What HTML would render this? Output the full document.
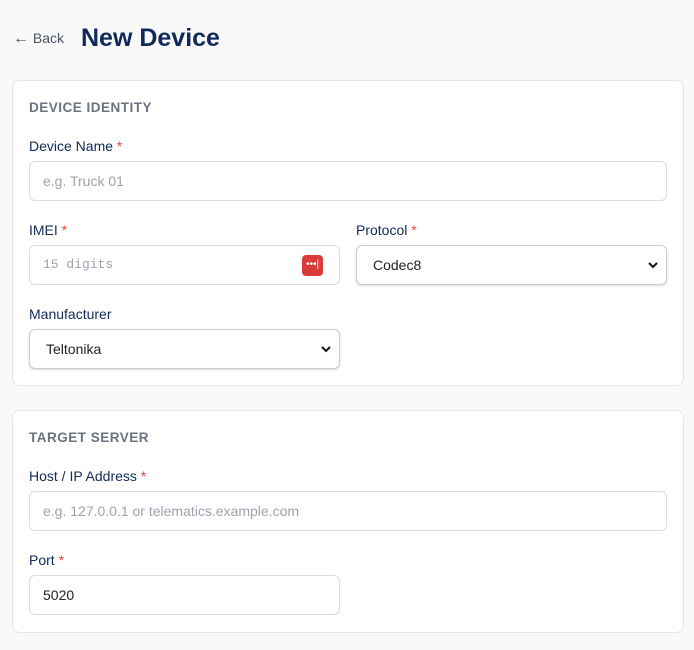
<!DOCTYPE html>
<html><head><style>
*{box-sizing:border-box;margin:0;padding:0}
body{width:694px;height:650px;background:#f9f9f9;font-family:"Liberation Sans",sans-serif;position:relative;overflow:hidden}
.abs{position:absolute}
.back{left:13px;top:30px;font-size:14px;color:#4b5563}
.back span{font-size:16px}
.title{left:81px;top:24px;font-size:25px;font-weight:bold;color:#0f2a5a}
.card{position:absolute;left:12px;width:672px;background:#fff;border:1px solid #e3e5e8;border-radius:8px}
.sec{position:absolute;left:16px;font-size:13.5px;font-weight:bold;color:#6b7280;letter-spacing:.5px}
.lab{position:absolute;font-size:14px;color:#0f2a5a}
.lab b{color:#ef4444;font-weight:normal}
.inp{position:absolute;height:40px;border:1px solid #d8dbe0;border-radius:6px;background:#fff;font-size:14px;padding-left:13px;line-height:38px;color:#9ca3af}
.sel{color:#222;box-shadow:0 1px 2px rgba(0,0,0,.15);border-color:#c9ccd1}
.chev{position:absolute;right:8px;top:15px}
</style></head><body>
<div class="abs back"><span>&#8592;</span> Back</div>
<div class="abs title">New Device</div>
<div class="card" style="top:80px;height:306px">
<div class="sec" style="top:19px">DEVICE IDENTITY</div>
<div class="lab" style="left:16px;top:57px">Device Name <b>*</b></div>
<div class="inp" style="left:16px;top:80px;width:638px">e.g. Truck 01</div>
<div class="lab" style="left:16px;top:141px">IMEI <b>*</b></div>
<div class="inp" style="left:16px;top:164px;width:311px;font-family:'Liberation Mono',monospace;font-size:13px">15 digits
<div style="position:absolute;right:16px;top:9px;width:21px;height:21px;background:#d93b3b;border-radius:4px;color:#fff;font-size:10px;line-height:19px;text-align:center;font-family:'Liberation Sans'">•••|</div></div>
<div class="lab" style="left:343px;top:141px">Protocol <b>*</b></div>
<div class="inp sel" style="left:343px;top:164px;width:311px;padding-left:16px">Codec8<svg class="chev" width="10" height="8" viewBox="0 0 10 8"><path d="M1 2l4 4 4-4" stroke="#111" stroke-width="2" fill="none"/></svg></div>
<div class="lab" style="left:16px;top:225px">Manufacturer</div>
<div class="inp sel" style="left:16px;top:248px;width:311px;padding-left:16px">Teltonika<svg class="chev" width="10" height="8" viewBox="0 0 10 8"><path d="M1 2l4 4 4-4" stroke="#111" stroke-width="2" fill="none"/></svg></div>
</div>
<div class="card" style="top:410px;height:223px">
<div class="sec" style="top:19px">TARGET SERVER</div>
<div class="lab" style="left:16px;top:57px">Host / IP Address <b>*</b></div>
<div class="inp" style="left:16px;top:80px;width:638px">e.g. 127.0.0.1 or telematics.example.com</div>
<div class="lab" style="left:16px;top:141px">Port <b>*</b></div>
<div class="inp" style="left:16px;top:164px;width:311px;color:#222">5020</div>
</div>
</body></html>
